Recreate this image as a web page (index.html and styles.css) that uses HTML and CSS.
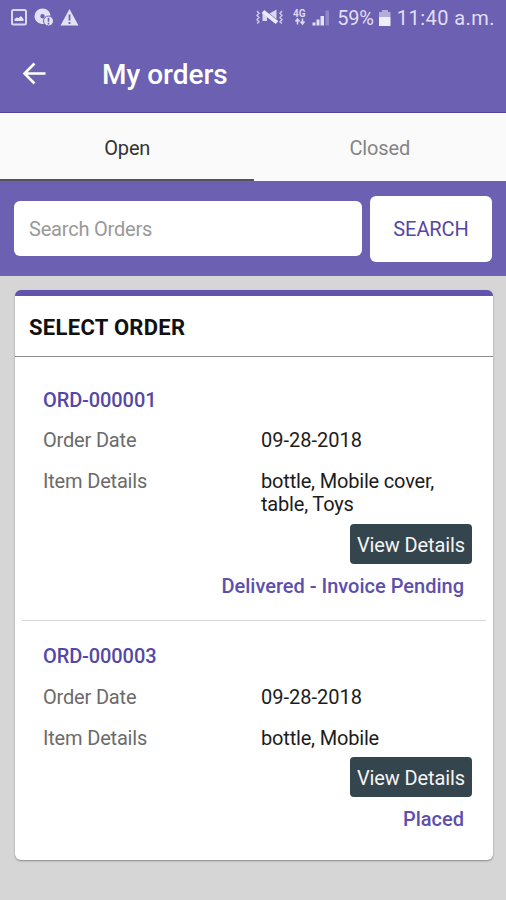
FILE: index.html
```html
<!DOCTYPE html>
<html lang="en">
<head>
<meta charset="utf-8">
<title>My orders</title>
<link rel="stylesheet" href="styles.css">
</head>
<body>
<header class="appbar">
  <div class="status">
    <svg class="status-left" width="72" height="20" viewBox="0 0 72 20" fill="none">
      <rect x="3" y="2" width="14" height="14.600" rx="1.500" stroke="#dcd7f0" stroke-width="2"/>
      <path d="M5.500 13V11l2-1.500 2 .5 2.500-2 2.500 3v2z" fill="#e5e1f5"/>
      <path fill-rule="evenodd" d="M33.500.500a8 7.800 0 0 0-8 7.800c0 4 3.500 7.700 8 7.700h3V11l5-3.500C41 3.500 38 .5 33.500.5zm0 5.500a2.200 2.200 0 1 1 0 4.400 2.200 2.200 0 0 1 0-4.400z" fill="#e5e1f5"/>
      <circle cx="39.500" cy="13" r="5" fill="#e5e1f5" stroke="#6b60b1"/>
      <path d="M39.500 9.800v4M39.500 14.800v1.700" stroke="#6b60b1" stroke-width="1.600"/>
      <path d="M60.500 1 69.500 17.500h-18z" fill="#e5e1f5"/>
      <path d="M60.500 6.500v6M60.500 14v2" stroke="#6b60b1" stroke-width="1.800"/>
    </svg>
    <svg class="status-right" width="78" height="20" viewBox="0 0 78 20" fill="none">
      <path d="M1 3l2 2.200-2 2.200 2 2.200-2 2.200 2 2.200-2 1.500M26 3l-2 2.200 2 2.200-2 2.200 2 2.200-2 2.200 2 1.500" stroke="#c9c3e6" stroke-width="1.500"/>
      <path d="M6.500 5v8h4.500v-4z" fill="#dcd7f0"/>
      <path d="M13.500 5.500 20.500 1.500V11z" fill="#dcd7f0"/>
      <path d="M7 3.500 21 14.500" stroke="#eeeafb" stroke-width="4"/>
      <text x="37" y="8.500" class="net">4G</text>
      <path d="M41.500 11v5.500M39.500 13.500l2-2.500 2 2.500M46.500 10.500V16M44.500 13.500l2 2.500 2-2.500" stroke="#ded9f2" stroke-width="1.500"/>
      <path d="M56.500 14.500h3v3h-3zM60.500 11.500h3v6h-3zM64.500 8h3.500v9.500h-3.500z" fill="#e5e1f5"/>
      <path d="M69.500 2.500h3.500v15h-3.500z" fill="#9086c5"/>
    </svg>
    <span class="pct">59%</span>
    <svg class="battery" width="14" height="18" viewBox="0 0 14 18">
      <path d="M4 1h6v2h2.500v5H1V3h3z" fill="#b4acd9"/>
      <path d="M1 8h11.500v9H1z" fill="#f0edfa"/>
    </svg>
    <span class="clock">11:40 a.m.</span>
  </div>
  <div class="titlebar">
    <svg width="24" height="24" viewBox="0 0 24 24" fill="none" stroke="#fff" stroke-width="2.600">
      <path d="M12.500 1.500 2.500 11.500l10 10M2.500 11.500H23.500"/>
    </svg>
    <h1 class="title">My orders</h1>
  </div>
</header>
<nav class="tabs">
  <div class="tab active"><span>Open</span></div>
  <div class="tab"><span>Closed</span></div>
</nav>
<section class="searchbar">
  <div class="field"><span>Search Orders</span></div>
  <div class="search-btn"><span>SEARCH</span></div>
</section>
<main class="card">
  <h2 class="card-title"><span>SELECT ORDER</span></h2>
  <article class="order">
    <h3 class="order-id">ORD-000001</h3>
    <div class="row"><span class="label">Order Date</span><span class="value date">09-28-2018</span></div>
    <div class="row"><span class="label">Item Details</span><span class="value">bottle, Mobile cover,<br>table, Toys</span></div>
    <div class="view">View Details</div>
    <div class="state">Delivered - Invoice Pending</div>
  </article>
  <article class="order">
    <h3 class="order-id">ORD-000003</h3>
    <div class="row"><span class="label">Order Date</span><span class="value date">09-28-2018</span></div>
    <div class="row"><span class="label">Item Details</span><span class="value">bottle, Mobile</span></div>
    <div class="view">View Details</div>
    <div class="state">Placed</div>
  </article>
</main>
</body>
</html>
```
FILE: styles.css
```css
* { box-sizing: border-box; }
body {
  margin: 0;
  height: 900px;
  overflow: hidden;
  background: #d6d6d6;
  color: #1c1c1c;
  font: 20px/23px Roboto, "Liberation Sans", sans-serif;
}
h1, h2, h3 { margin: 0; }
.appbar { height: 113px; background: #6b60b1; border-bottom: 1px solid #5144a0; }
.status {
  display: flex;
  align-items: center;
  height: 36px;
  padding: 0 11px 0 9px;
  color: #e2def3;
}
.status-right { margin-left: auto; margin-right: 3px; }
.net { font-size: 10px; font-weight: 700; fill: #ded9f2; }
.pct { letter-spacing: -0.2px; }
.battery { margin: 0 5px 0 4px; }
.clock { letter-spacing: 0.45px; }
.titlebar { display: flex; align-items: center; gap: 56px; height: 76px; padding-left: 22px; }
.title { padding-top: 2px; color: #fff; font-size: 28px; line-height: 32px; font-weight: 500; }
.tabs { display: flex; height: 68px; background: #fafafa; }
.tab {
  flex: 1;
  display: flex;
  align-items: center;
  justify-content: center;
  padding-top: 2px;
  color: #858585;
  letter-spacing: -0.15px;
}
.tab.active { color: #333; border-bottom: 2px solid #55515f; padding: 4px 0 0 1px; }
.searchbar {
  display: flex;
  align-items: center;
  gap: 8px;
  height: 95px;
  padding: 0 14px;
  background: #6b60b1;
}
.field {
  display: flex;
  align-items: center;
  width: 348px;
  height: 55px;
  padding: 2px 0 0 15px;
  border-radius: 6px;
  background: #fff;
  color: #999;
  letter-spacing: -0.2px;
}
.search-btn {
  display: flex;
  align-items: center;
  justify-content: center;
  width: 122px;
  height: 66px;
  padding-top: 2px;
  border-radius: 6px;
  background: #fff;
  color: #5546a7;
  letter-spacing: -0.1px;
}
.card {
  width: 478px;
  height: 570px;
  margin: 14px 0 0 15px;
  border-top: 6px solid #6254ac;
  border-radius: 6px;
  background: #fff;
  box-shadow: 0 1px 2px #888;
}
.card-title {
  display: flex;
  align-items: center;
  height: 61px;
  padding: 2px 0 0 14px;
  border-bottom: 1px solid #8c8c8c;
  font-size: 22px;
  font-weight: 700;
  letter-spacing: 0.3px;
  color: #111;
}
.order { display: flex; flex-direction: column; margin: 0 7px; padding: 32px 14px 22px 21px; }
.order + .order { padding-top: 24px; border-top: 1px solid #d6d6d6; }
.order-id { font-size: 20px; font-weight: 500; color: #5647a6; letter-spacing: -0.1px; }
.row { display: flex; margin-top: 18px; letter-spacing: -0.18px; }
.order-id + .row { margin-top: 17px; }
.order + .order .order-id + .row { margin-top: 18px; }
.date { letter-spacing: 0; }
.label { width: 218px; color: #6b6b6b; }
.view {
  align-self: flex-end;
  width: 122px;
  height: 40px;
  margin-top: 8px;
  border-radius: 4px;
  background: #35454e;
  color: #f5f5f5;
  line-height: 42px;
  letter-spacing: -0.1px;
  text-align: center;
}
.state { margin: 11px 8px 0 0; color: #5d4fad; font-weight: 500; text-align: right; }
.order + .order .view { margin-top: 7px; }
```
